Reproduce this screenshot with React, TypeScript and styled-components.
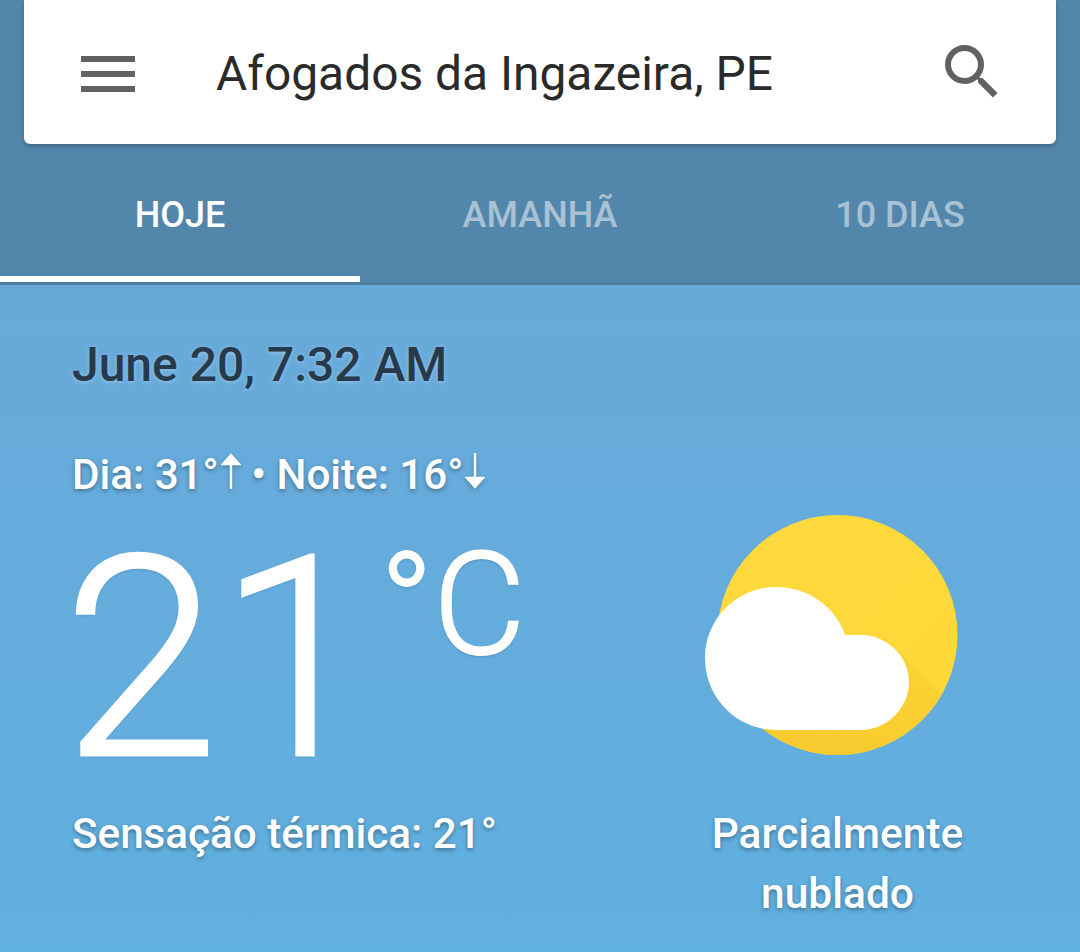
import React from "react";
import styled, { createGlobalStyle } from "styled-components";
import { MdMenu, MdSearch } from "react-icons/md";

const Global = createGlobalStyle`
  html, body {
    margin: 0;
    padding: 0;
    background: #62aedf;
  }
  * {
    box-sizing: border-box;
  }
`;

const tabs = [
  { label: "HOJE", active: true },
  { label: "AMANHÃ", active: false },
  { label: "10 DIAS", active: false },
];

const SunCloud = () => (
  <svg width="260" height="250" viewBox="700 510 260 250">
    <defs>
      <clipPath id="sun">
        <circle cx="837.5" cy="635" r="120" />
      </clipPath>
      <linearGradient id="sunFill" x1="0" y1="0" x2="1" y2="1">
        <stop offset="0" stopColor="#fdd93f" />
        <stop offset="1" stopColor="#fed835" />
      </linearGradient>
      <linearGradient id="cloudShade" x1="1" y1="0" x2="0.3" y2="1">
        <stop offset="0" stopColor="#fbd435" />
        <stop offset="1" stopColor="#f7ca2e" />
      </linearGradient>
    </defs>
    <circle cx="837.5" cy="635" r="120" fill="url(#sunFill)" />
    <polygon
      clipPath="url(#sun)"
      points="885,638 965,718 965,770 740,770 740,730"
      fill="url(#cloudShade)"
    />
    <path
      d="M776 587 C808 587 836 607 845 635 L861 635 C887 635 909 656 909 682 C909 708 887 730 861 730 L776 730 C737 730 705 698 705 658 C705 619 737 587 776 587 Z"
      fill="#fff"
    />
  </svg>
);

const UpArrow = () => (
  <ArrowIcon viewBox="0 0 20 36">
    <path d="M10 36V2M2 11 10 2l8 9z" stroke="#fff" strokeWidth="2.4" fill="#fff" />
  </ArrowIcon>
);

const DownArrow = () => (
  <ArrowIcon viewBox="0 0 20 36">
    <path d="M10 0V34M2 25l8 9 8-9z" stroke="#fff" strokeWidth="2.4" fill="#fff" />
  </ArrowIcon>
);

export default function App() {
  return (
    <Page>
      <Global />
      <Header>
        <SearchCard>
          <IconSlot $color="#616161" $nudge="3px">
            <MdMenu size={72} />
          </IconSlot>
          <City>Afogados da Ingazeira, PE</City>
          <IconSlot $color="#616161">
            <MdSearch size={72} />
          </IconSlot>
        </SearchCard>
        <Tabs>
          {tabs.map((t) => (
            <Tab key={t.label} $active={t.active}>
              {t.label}
            </Tab>
          ))}
        </Tabs>
      </Header>
      <Content>
        <DateLine>June 20, 7:32 AM</DateLine>
        <DayNight>
          Dia: 31°
          <UpArrow /> • Noite: 16°
          <DownArrow />
        </DayNight>
        <Main>
          <Left>
            <TempRow>
              <Temp>21</Temp>
              <Unit>°C</Unit>
            </TempRow>
            <Feels>Sensação térmica: 21°</Feels>
          </Left>
          <Right>
            <SunCloud />
            <Condition>
              Parcialmente
              <br />
              nublado
            </Condition>
          </Right>
        </Main>
      </Content>
    </Page>
  );
}

const Page = styled.div`
  width: 1080px;
  height: 952px;
  overflow: hidden;
  font-family: Roboto, "Liberation Sans", sans-serif;
  display: flex;
  flex-direction: column;
`;

const Header = styled.header`
  background: #5286ab;
  border-bottom: 3px solid #4d7ea2;
`;

const SearchCard = styled.div`
  margin: 0 24px;
  height: 144px;
  background: #fff;
  border-radius: 0 0 6px 6px;
  box-shadow: 0 2px 4px rgba(0, 0, 0, 0.25);
  padding: 0 48px;
  display: flex;
  align-items: center;
`;

const IconSlot = styled.div<{ $color: string; $nudge?: string }>`
  width: 72px;
  height: 72px;
  flex: none;
  color: ${(p) => p.$color};
  margin-top: ${(p) => p.$nudge || "0"};
  svg {
    display: block;
  }
`;

const City = styled.div`
  flex: 1;
  margin-left: 72px;
  padding-top: 3px;
  font-size: 47.9px;
  font-weight: 400;
  color: #2a2a2a;
  white-space: nowrap;
`;

const Tabs = styled.nav`
  display: grid;
  grid-template-columns: repeat(3, 1fr);
  height: 138px;
`;

const Tab = styled.div<{ $active: boolean }>`
  display: flex;
  align-items: center;
  justify-content: center;
  padding-top: 10px;
  font-size: 36px;
  font-weight: 500;
  color: ${(p) => (p.$active ? "#fff" : "rgba(255, 255, 255, 0.5)")};
  border-bottom: 6px solid ${(p) => (p.$active ? "#fff" : "transparent")};
`;

const Content = styled.main`
  flex: 1;
  padding: 50px 0 0 72px;
  background: linear-gradient(#68a9d9, #60b0e0);
  color: #fff;
  font-weight: 500;
  text-shadow: 0 2px 4px rgba(0, 0, 0, 0.35);
`;

const DateLine = styled.div`
  font-size: 48px;
  line-height: 60px;
  color: #263a4c;
  text-shadow: 0 1px 4px rgba(255, 255, 255, 0.35);
`;

const DayNight = styled.div`
  margin-top: 56px;
  font-size: 42.2px;
  line-height: 48px;
  white-space: nowrap;
`;

const ArrowIcon = styled.svg`
  width: 20px;
  height: 36px;
  margin-left: 2px;
  vertical-align: baseline;
  filter: drop-shadow(0 2px 2px rgba(0, 0, 0, 0.25));
`;

const Main = styled.div`
  display: flex;
`;

const Left = styled.div`
  width: 560px;
`;

const TempRow = styled.div`
  display: flex;
  align-items: flex-start;
  height: 305px;
  padding-top: 18px;
`;

const Temp = styled.div`
  font-size: 280px;
  font-weight: 300;
  line-height: 284px;
  margin-left: -9px;
  -webkit-text-stroke: 3px #fff;
  text-shadow: 0 2px 3px rgba(0, 0, 0, 0.15);
`;

const Unit = styled.div`
  font-size: 142px;
  font-weight: 300;
  line-height: 160px;
  margin: 9px 0 0 6px;
  -webkit-text-stroke: 2px #fff;
  text-shadow: 0 2px 3px rgba(0, 0, 0, 0.15);
`;

const Feels = styled.div`
  font-size: 42.2px;
  line-height: 60px;
  white-space: nowrap;
`;

const Right = styled.div`
  width: 300px;
  margin-left: 48px;
  padding-top: 11px;
  display: flex;
  flex-direction: column;
  align-items: center;
`;

const Condition = styled.div`
  margin: 44px 0 0 15px;
  font-size: 42.5px;
  line-height: 60px;
  text-align: center;
`;
